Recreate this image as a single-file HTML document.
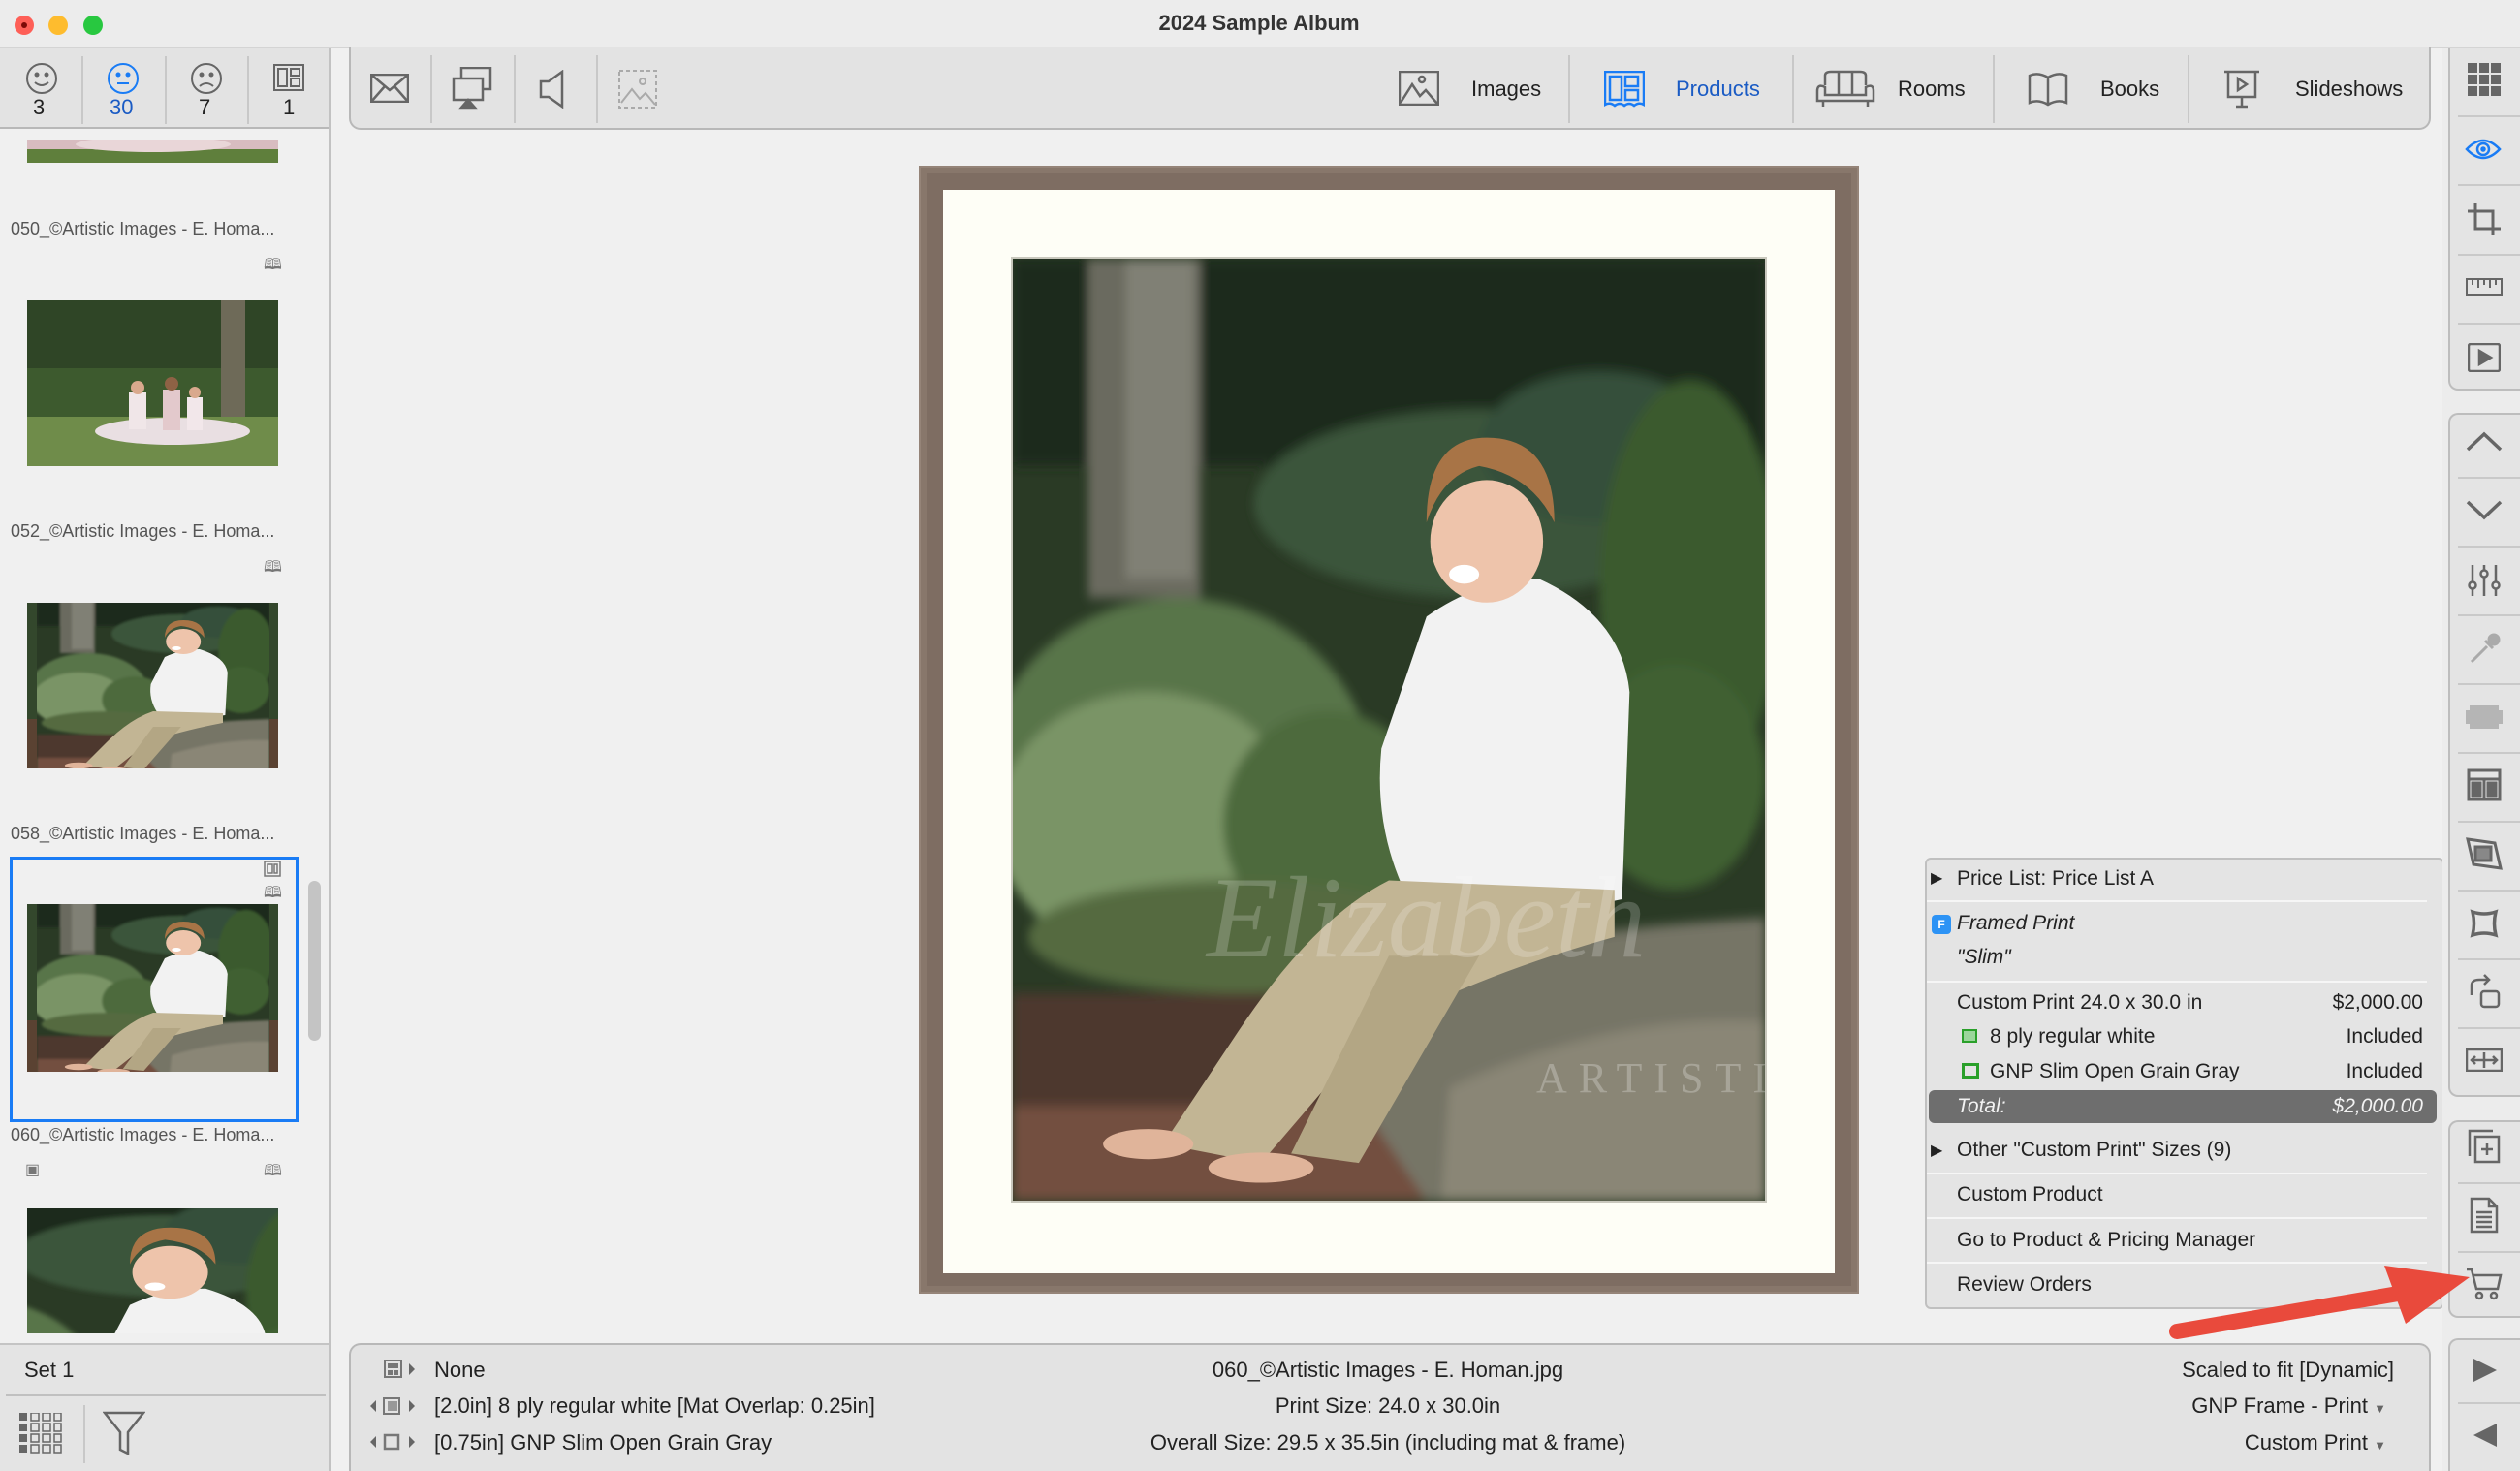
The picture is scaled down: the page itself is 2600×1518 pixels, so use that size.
<!DOCTYPE html>
<html><head><meta charset="utf-8">
<style>
*{margin:0;padding:0;box-sizing:border-box}
html,body{width:2600px;height:1518px;overflow:hidden}
body{background:#f0f0f0;font-family:"Liberation Sans",sans-serif;color:#222;position:relative}
.a{position:absolute}
.t{position:absolute;white-space:nowrap}
.sep{position:absolute;width:2px;background:#c8c8c8}
.lbl{font-size:18px;color:#555}
.pr{font-size:21px;color:#222}
.rg{position:absolute;left:2526px;width:80px;background:#e4e4e4;border:2px solid #bdbdbd;border-right:none;border-radius:10px 0 0 10px}
.rs{position:absolute;left:2536px;width:64px;height:2px;background:#c9c9c9}
.bt{font-size:22px;color:#222}
</style></head><body>
<svg width="0" height="0" style="position:absolute">
<defs>
<filter id="bl"><feGaussianBlur stdDeviation="0.6"/></filter>
<symbol id="photo" viewBox="0 0 100 100" preserveAspectRatio="none">
<rect width="100" height="100" fill="#2a3a25"/>
<g filter="url(#bl)">
<rect x="0" y="0" width="100" height="22" fill="#1e2a1b"/>
<ellipse cx="62" cy="26" rx="30" ry="10" fill="#3b553a"/>
<ellipse cx="78" cy="20" rx="16" ry="8" fill="#34503a"/>
<ellipse cx="90" cy="35" rx="12" ry="22" fill="#3a5a2e"/>
<ellipse cx="88" cy="55" rx="12" ry="12" fill="#3f6030"/>
<rect x="10" y="0" width="15" height="36" fill="#6a6a5f"/>
<rect x="15" y="0" width="9" height="34" fill="#808075"/>
<ellipse cx="22" cy="56" rx="26" ry="20" fill="#59744a"/>
<ellipse cx="18" cy="60" rx="20" ry="14" fill="#7a9466"/>
<ellipse cx="42" cy="60" rx="14" ry="12" fill="#4d6a3e"/>
<ellipse cx="30" cy="72" rx="28" ry="6" fill="#546b40"/>
<rect x="0" y="78" width="65" height="22" fill="#4e392d"/>
<rect x="0" y="90" width="68" height="10" fill="#73503f"/>
<path d="M38 80 Q55 72 100 70 L100 100 L55 100 Z" fill="#767466"/>
<path d="M58 88 Q80 80 100 81 L100 100 L57 100 Z" fill="#8a8676"/>
</g>
<path d="M55 38 Q62 34 70 34 Q81 38 82 46 L81 68 Q70 70 52 67 Q48 60 49 52 Z" fill="#f2f2f2"/>
<path d="M50 66 L80 67 L80 72 Q62 76 48 82 L33 96 L20 94 L30 82 Q40 70 50 66 Z" fill="#c2b594"/>
<path d="M50 74 L62 74 L46 96 L37 95 Z" fill="#b3a684"/>
<ellipse cx="18" cy="94" rx="6" ry="1.6" fill="#e0b49a"/>
<ellipse cx="33" cy="96.5" rx="7" ry="1.6" fill="#e0b49a"/>
<ellipse cx="63" cy="30" rx="7.5" ry="6.5" fill="#eec4ab"/>
<path d="M55 28 Q55 19 63 19 Q72 19 72 28 Q69 23 62 22 Q57 23 55 28 Z" fill="#a87446"/>
<ellipse cx="60" cy="33.5" rx="2" ry="1" fill="#fff"/>
</symbol>
</defs>
</svg>

<!-- title bar -->
<div class="a" style="left:0;top:0;width:2600px;height:50px;background:#ececec;border-bottom:1px solid #d4d4d4"></div>
<div class="a" style="left:15px;top:16px;width:20px;height:20px;border-radius:50%;background:#fe5f57"></div>
<div class="a" style="left:22px;top:23px;width:6px;height:6px;border-radius:50%;background:#7d0a07"></div>
<div class="a" style="left:50px;top:16px;width:20px;height:20px;border-radius:50%;background:#febc2e"></div>
<div class="a" style="left:86px;top:16px;width:20px;height:20px;border-radius:50%;background:#28c840"></div>
<div class="t" style="left:0;width:2598px;top:11px;text-align:center;font-size:22px;font-weight:bold;color:#333">2024 Sample Album</div>

<!-- left sidebar -->
<div class="a" style="left:0;top:50px;width:340px;height:83px;background:#e3e3e3;border-bottom:2px solid #b8b8b8"></div>
<div class="a" style="left:339px;top:50px;width:2px;height:1468px;background:#c2c2c2"></div>
<div class="sep" style="left:84px;top:58px;height:70px"></div>
<div class="sep" style="left:170px;top:58px;height:70px"></div>
<div class="sep" style="left:255px;top:58px;height:70px"></div>
<svg class="a" style="left:26px;top:64px" width="34" height="34" viewBox="0 0 34 34" fill="none" stroke="#666" stroke-width="2"><circle cx="17" cy="17" r="15"/><circle cx="12" cy="13" r="1.5" fill="#666"/><circle cx="22" cy="13" r="1.5" fill="#666"/><path d="M10 21 Q17 27 24 21"/></svg>
<div class="t" style="left:34px;top:98px;font-size:22px">3</div>
<svg class="a" style="left:110px;top:64px" width="34" height="34" viewBox="0 0 34 34" fill="none" stroke="#1a7cf5" stroke-width="2"><circle cx="17" cy="17" r="15"/><circle cx="12" cy="13" r="1.5" fill="#1a7cf5"/><circle cx="22" cy="13" r="1.5" fill="#1a7cf5"/><path d="M11 22 H23"/></svg>
<div class="t" style="left:113px;top:98px;font-size:22px;color:#1a5bc4">30</div>
<svg class="a" style="left:196px;top:64px" width="34" height="34" viewBox="0 0 34 34" fill="none" stroke="#666" stroke-width="2"><circle cx="17" cy="17" r="15"/><circle cx="12" cy="13" r="1.5" fill="#666"/><circle cx="22" cy="13" r="1.5" fill="#666"/><path d="M10 25 Q17 19 24 25"/></svg>
<div class="t" style="left:205px;top:98px;font-size:22px">7</div>
<svg class="a" style="left:282px;top:66px" width="32" height="30" viewBox="0 0 32 30" fill="none" stroke="#666" stroke-width="2"><rect x="1" y="1" width="30" height="26"/><rect x="5" y="5" width="9" height="18"/><rect x="18" y="5" width="9" height="7"/><rect x="18" y="15" width="9" height="8"/></svg>
<div class="t" style="left:292px;top:98px;font-size:22px">1</div>

<!-- thumbnails -->
<svg class="a" style="left:28px;top:144px" width="259" height="24"><rect width="259" height="24" fill="#5f7f3c"/><rect width="259" height="10" fill="#d8bcc0"/><ellipse cx="130" cy="5" rx="80" ry="8" fill="#e9d6d8"/></svg>
<div class="t lbl" style="left:11px;top:226px">050_©Artistic Images - E. Homa...</div>
<div class="t" style="left:272px;top:262px;font-size:16px;color:#777">🕮</div>
<svg class="a" style="left:28px;top:310px" width="259" height="171" viewBox="0 0 259 171"><rect width="259" height="171" fill="#3d5a2e"/><rect x="0" y="0" width="259" height="70" fill="#2f4526"/><rect x="200" y="0" width="25" height="130" fill="#6e6a58"/><rect x="0" y="120" width="259" height="51" fill="#6f8c4a"/><ellipse cx="150" cy="135" rx="80" ry="14" fill="#e9dfe2"/><rect x="105" y="95" width="18" height="38" fill="#f0e6e8"/><rect x="140" y="92" width="18" height="42" fill="#e3c9cc"/><rect x="165" y="100" width="16" height="34" fill="#f2e7ea"/><circle cx="114" cy="90" r="7" fill="#d9a98d"/><circle cx="149" cy="86" r="7" fill="#8e6245"/><circle cx="173" cy="95" r="6" fill="#d9a98d"/></svg>
<div class="t lbl" style="left:11px;top:538px">052_©Artistic Images - E. Homa...</div>
<div class="t" style="left:272px;top:574px;font-size:16px;color:#777">🕮</div>
<svg class="a" style="left:28px;top:622px" width="259" height="171"><rect width="259" height="171" fill="#33472c"/><rect x="0" y="120" width="259" height="51" fill="#5a4232"/><use href="#photo" x="10" y="-20" width="240" height="200"/></svg>
<div class="t lbl" style="left:11px;top:850px">058_©Artistic Images - E. Homa...</div>
<div class="a" style="left:10px;top:884px;width:298px;height:274px;border:3px solid #1a7cf5"></div>
<svg class="a" style="left:272px;top:888px" width="18" height="18" viewBox="0 0 18 18" fill="none" stroke="#777" stroke-width="1.5"><rect x="1" y="1" width="16" height="15"/><rect x="4" y="4" width="5" height="9"/><rect x="11" y="4" width="3" height="9"/></svg>
<div class="t" style="left:272px;top:910px;font-size:16px;color:#777">🕮</div>
<svg class="a" style="left:28px;top:933px" width="259" height="173"><rect width="259" height="173" fill="#33472c"/><rect x="0" y="120" width="259" height="53" fill="#5a4232"/><use href="#photo" x="10" y="-20" width="240" height="200"/></svg>
<div class="t lbl" style="left:11px;top:1161px">060_©Artistic Images - E. Homa...</div>
<div class="t" style="left:26px;top:1197px;font-size:16px;color:#777">▣</div>
<div class="t" style="left:272px;top:1197px;font-size:16px;color:#777">🕮</div>
<svg class="a" style="left:28px;top:1247px" width="259" height="129"><use href="#photo" x="-180" y="-60" width="520" height="420"/></svg>
<div class="a" style="left:318px;top:909px;width:13px;height:165px;border-radius:7px;background:#c4c4c4"></div>

<!-- sidebar bottom -->
<div class="a" style="left:0;top:1386px;width:339px;height:132px;background:#e4e4e4;border-top:2px solid #c4c4c4"></div>
<div class="t" style="left:25px;top:1401px;font-size:22px">Set 1</div>
<div class="a" style="left:6px;top:1439px;width:330px;height:2px;background:#c0c0c0"></div>
<div class="sep" style="left:86px;top:1450px;height:60px"></div>
<svg class="a" style="left:20px;top:1458px" width="44" height="42" viewBox="0 0 44 42" fill="#666"><g id="gr"><rect x="0" y="0" width="8" height="8"/><rect x="12" y="0" width="8" height="8" fill="none" stroke="#666" stroke-width="1.5"/><rect x="24" y="0" width="8" height="8" fill="none" stroke="#666" stroke-width="1.5"/><rect x="36" y="0" width="7" height="8" fill="none" stroke="#666" stroke-width="1.5"/></g><use href="#gr" y="11"/><use href="#gr" y="22"/><use href="#gr" y="33"/></svg>
<svg class="a" style="left:106px;top:1456px" width="44" height="46" viewBox="0 0 44 46" fill="none" stroke="#666" stroke-width="2.5"><path d="M2 2 H42 L26 22 V44 L18 40 V22 Z"/></svg>

<!-- main toolbar -->
<div class="a" style="left:360px;top:48px;width:2148px;height:86px;background:#e3e3e3;border:2px solid #b8b8b8;border-top:none;border-radius:0 0 12px 12px"></div>
<div class="sep" style="left:444px;top:57px;height:70px"></div>
<div class="sep" style="left:530px;top:57px;height:70px"></div>
<div class="sep" style="left:615px;top:57px;height:70px"></div>
<svg class="a" style="left:382px;top:76px" width="40" height="30" viewBox="0 0 40 30" fill="none" stroke="#666" stroke-width="2.5"><rect x="1" y="1" width="38" height="28"/><path d="M1 1 L20 17 L39 1 M1 29 L15 13 M39 29 L25 13"/></svg>
<svg class="a" style="left:466px;top:69px" width="42" height="44" viewBox="0 0 42 44" fill="none" stroke="#666" stroke-width="2.5"><rect x="10" y="1" width="30" height="22"/><rect x="2" y="12" width="30" height="22" fill="#e3e3e3"/><path d="M17 34 L10 42 H24 Z" fill="#666"/></svg>
<svg class="a" style="left:556px;top:72px" width="30" height="40" viewBox="0 0 30 40" fill="none" stroke="#666" stroke-width="2.5"><path d="M2 12 H10 L24 2 V38 L10 28 H2 Z"/></svg>
<svg class="a" style="left:638px;top:72px" width="40" height="40" viewBox="0 0 40 40" fill="none" stroke="#aaa" stroke-width="2" stroke-dasharray="4 3"><rect x="1" y="1" width="38" height="38"/><path d="M3 34 L14 20 L22 30 L28 24 L38 36" stroke-dasharray="none"/><circle cx="25" cy="12" r="3" stroke-dasharray="none"/></svg>

<svg class="a" style="left:1443px;top:73px" width="42" height="36" viewBox="0 0 42 36" fill="none" stroke="#666" stroke-width="2.5"><rect x="1" y="1" width="40" height="34"/><path d="M2 33 L14 14 L22 26 L28 20 L40 34"/><circle cx="24" cy="9" r="3"/></svg>
<div class="t" style="left:1518px;top:79px;font-size:22px">Images</div>
<div class="sep" style="left:1618px;top:57px;height:70px"></div>
<svg class="a" style="left:1655px;top:73px" width="42" height="38" viewBox="0 0 42 38" fill="none" stroke="#1a7cf5" stroke-width="2.5"><path d="M1 1 H41 V35 Q36 32 31 36 Q26 32 21 36 Q16 32 11 36 Q6 32 1 35 Z"/><rect x="6" y="6" width="12" height="24"/><rect x="22" y="6" width="13" height="10"/><rect x="22" y="20" width="13" height="10"/></svg>
<div class="t" style="left:1729px;top:79px;font-size:22px;color:#1a5bc4">Products</div>
<div class="sep" style="left:1849px;top:57px;height:70px"></div>
<svg class="a" style="left:1873px;top:72px" width="62" height="40" viewBox="0 0 62 40" fill="none" stroke="#666" stroke-width="2.5"><path d="M10 16 V6 Q10 2 16 2 H46 Q52 2 52 6 V16"/><path d="M10 18 Q2 14 2 22 V32 H60 V22 Q60 14 52 18 V26 H10 Z"/><path d="M24 2 V26 M38 2 V26 M8 32 V38 M54 32 V38"/></svg>
<div class="t" style="left:1958px;top:79px;font-size:22px">Rooms</div>
<div class="sep" style="left:2056px;top:57px;height:70px"></div>
<svg class="a" style="left:2091px;top:74px" width="44" height="36" viewBox="0 0 44 36" fill="none" stroke="#666" stroke-width="2.5"><path d="M22 6 Q12 0 3 4 V32 Q12 28 22 34 Q32 28 41 32 V4 Q32 0 22 6 Z M22 6 V34"/></svg>
<div class="t" style="left:2167px;top:79px;font-size:22px">Books</div>
<div class="sep" style="left:2257px;top:57px;height:70px"></div>
<svg class="a" style="left:2294px;top:72px" width="38" height="40" viewBox="0 0 38 40" fill="none" stroke="#666" stroke-width="2.5"><path d="M1 2 H37 M5 2 V28 H33 V2 M19 28 V38 M13 38 H25"/><path d="M15 9 L24 15 L15 21 Z"/></svg>
<div class="t" style="left:2368px;top:79px;font-size:22px">Slideshows</div>

<!-- frame -->
<div class="a" style="left:948px;top:171px;width:970px;height:1164px;background:#7e6d62;border:2px solid #958478;box-shadow:inset 0 0 0 6px #88776b"></div>
<div class="a" style="left:973px;top:196px;width:920px;height:1118px;background:#fefef6"></div>
<div class="a" style="left:1043px;top:265px;width:780px;height:976px;background:#c9c8bd"></div>
<svg class="a" style="left:1045px;top:267px" width="776" height="972"><use href="#photo" width="776" height="972"/><text x="200" y="720" font-family="Liberation Serif,serif" font-style="italic" font-size="120" fill="#ffffff" fill-opacity="0.2">Elizabeth</text><text x="540" y="860" font-family="Liberation Serif,serif" font-size="44" letter-spacing="12" fill="#ffffff" fill-opacity="0.25">ARTISTI</text></svg>

<!-- price panel -->
<div class="a" style="left:1986px;top:885px;width:536px;height:466px;background:#e4e4e4;border:2px solid #c0c0c0;border-radius:6px"></div>
<div class="a" style="left:1988px;top:929px;width:516px;height:2px;background:#f6f6f6"></div>
<div class="a" style="left:1988px;top:1012px;width:516px;height:2px;background:#f6f6f6"></div>
<div class="a" style="left:1988px;top:1210px;width:516px;height:2px;background:#f6f6f6"></div>
<div class="a" style="left:1988px;top:1256px;width:516px;height:2px;background:#f6f6f6"></div>
<div class="a" style="left:1988px;top:1302px;width:516px;height:2px;background:#f6f6f6"></div>
<div class="t pr" style="left:1992px;top:896px;font-size:16px">▶</div>
<div class="t pr" style="left:2019px;top:895px">Price List: Price List A</div>
<div class="a" style="left:1993px;top:944px;width:20px;height:20px;border-radius:4px;background:#2d93f5;color:#fff;font-size:12px;font-weight:bold;text-align:center;line-height:20px">F</div>
<div class="t pr" style="left:2019px;top:941px;font-style:italic">Framed Print</div>
<div class="t pr" style="left:2019px;top:976px;font-style:italic">"Slim"</div>
<div class="t pr" style="left:2019px;top:1023px">Custom Print 24.0 x 30.0 in</div>
<div class="t pr" style="right:100px;top:1023px">$2,000.00</div>
<div class="a" style="left:2024px;top:1062px;width:16px;height:14px;border:2px solid #2aa02a;background:#9bd69b"></div>
<div class="t pr" style="left:2053px;top:1058px">8 ply regular white</div>
<div class="t pr" style="right:100px;top:1058px">Included</div>
<div class="a" style="left:2024px;top:1097px;width:18px;height:16px;border:3px solid #2aa02a"></div>
<div class="t pr" style="left:2053px;top:1094px">GNP Slim Open Grain Gray</div>
<div class="t pr" style="right:100px;top:1094px">Included</div>
<div class="a" style="left:1990px;top:1125px;width:524px;height:34px;background:#6e6e6e;border-radius:6px"></div>
<div class="t pr" style="left:2019px;top:1130px;font-style:italic;color:#f2f2f2">Total:</div>
<div class="t pr" style="right:100px;top:1130px;font-style:italic;color:#f2f2f2">$2,000.00</div>
<div class="t pr" style="left:1992px;top:1177px;font-size:16px">▶</div>
<div class="t pr" style="left:2019px;top:1175px">Other "Custom Print" Sizes (9)</div>
<div class="t pr" style="left:2019px;top:1221px">Custom Product</div>
<div class="t pr" style="left:2019px;top:1268px">Go to Product &amp; Pricing Manager</div>
<div class="t pr" style="left:2019px;top:1314px">Review Orders</div>

<!-- bottom bar -->
<div class="a" style="left:360px;top:1386px;width:2148px;height:132px;background:#e3e3e3;border:2px solid #b8b8b8;border-bottom:none;border-radius:12px 12px 0 0"></div>
<svg class="a" style="left:396px;top:1403px" width="42" height="20" viewBox="0 0 42 20"><rect x="1" y="1" width="17" height="17" fill="none" stroke="#777" stroke-width="2"/><rect x="4" y="4" width="11" height="5" fill="#777"/><rect x="4" y="11" width="5" height="5" fill="#777"/><rect x="10" y="11" width="5" height="5" fill="#777"/><path d="M26 4 L32 10 L26 16 Z" fill="#666"/></svg>
<div class="t bt" style="left:448px;top:1401px">None</div>
<svg class="a" style="left:380px;top:1440px" width="60" height="22" viewBox="0 0 60 22"><path d="M8 5 L2 11 L8 17 Z" fill="#666"/><rect x="16" y="3" width="16" height="16" fill="none" stroke="#777" stroke-width="2"/><rect x="20" y="6" width="10" height="10" fill="#999"/><path d="M42 5 L48 11 L42 17 Z" fill="#666"/></svg>
<div class="t bt" style="left:448px;top:1438px">[2.0in] 8 ply regular white [Mat Overlap: 0.25in]</div>
<svg class="a" style="left:380px;top:1477px" width="60" height="22" viewBox="0 0 60 22"><path d="M8 5 L2 11 L8 17 Z" fill="#666"/><rect x="17" y="4" width="14" height="14" fill="none" stroke="#777" stroke-width="2.5"/><path d="M42 5 L48 11 L42 17 Z" fill="#666"/></svg>
<div class="t bt" style="left:448px;top:1476px">[0.75in] GNP Slim Open Grain Gray</div>
<div class="t bt" style="left:1032px;width:800px;text-align:center;top:1401px">060_©Artistic Images - E. Homan.jpg</div>
<div class="t bt" style="left:1032px;width:800px;text-align:center;top:1438px">Print Size: 24.0 x 30.0in</div>
<div class="t bt" style="left:1032px;width:800px;text-align:center;top:1476px">Overall Size: 29.5 x 35.5in (including mat &amp; frame)</div>
<div class="t bt" style="right:130px;top:1401px">Scaled to fit [Dynamic]</div>
<div class="t bt" style="right:138px;top:1438px">GNP Frame - Print <span style="font-size:13px;color:#666">▼</span></div>
<div class="t bt" style="right:138px;top:1476px">Custom Print <span style="font-size:13px;color:#666">▼</span></div>

<!-- right column -->
<div class="a" style="left:2520px;top:50px;width:80px;height:1468px;background:#ececec"></div>
<div class="rg" style="top:50px;height:353px;border-top:none;border-radius:0 0 0 10px"></div>
<div class="rg" style="top:426px;height:706px"></div>
<div class="rg" style="top:1156px;height:204px"></div>
<div class="rg" style="top:1381px;height:137px;border-bottom:none;border-radius:10px 0 0 0"></div>
<div class="rs" style="top:119px"></div><div class="rs" style="top:190px"></div><div class="rs" style="top:262px"></div><div class="rs" style="top:333px"></div>
<div class="rs" style="top:492px"></div><div class="rs" style="top:563px"></div><div class="rs" style="top:634px"></div><div class="rs" style="top:705px"></div><div class="rs" style="top:776px"></div><div class="rs" style="top:847px"></div><div class="rs" style="top:918px"></div><div class="rs" style="top:989px"></div><div class="rs" style="top:1060px"></div>
<div class="rs" style="top:1220px"></div><div class="rs" style="top:1291px"></div>
<div class="rs" style="top:1447px"></div>
<svg class="a" style="left:2546px;top:65px" width="34" height="34" fill="#666"><rect x="0" y="0" width="10" height="10"/><rect x="12" y="0" width="10" height="10"/><rect x="24" y="0" width="10" height="10"/><rect x="0" y="12" width="10" height="10"/><rect x="12" y="12" width="10" height="10"/><rect x="24" y="12" width="10" height="10"/><rect x="0" y="24" width="10" height="10"/><rect x="12" y="24" width="10" height="10"/><rect x="24" y="24" width="10" height="10"/></svg>
<svg class="a" style="left:2543px;top:142px" width="38" height="24" viewBox="0 0 38 24" fill="none" stroke="#1a7cf5" stroke-width="2.5"><path d="M2 12 Q19 -6 36 12 Q19 30 2 12 Z"/><circle cx="19" cy="12" r="6"/><circle cx="19" cy="12" r="1.5" fill="#1a7cf5"/></svg>
<svg class="a" style="left:2545px;top:209px" width="36" height="36" viewBox="0 0 36 36" fill="none" stroke="#666" stroke-width="3"><path d="M9 1 V27 H35 M1 9 H27 V33"/></svg>
<svg class="a" style="left:2544px;top:287px" width="38" height="18" viewBox="0 0 38 18" fill="none" stroke="#666" stroke-width="2"><rect x="1" y="1" width="36" height="16"/><path d="M7 1 V7 M13 1 V10 M19 1 V7 M25 1 V10 M31 1 V7"/></svg>
<svg class="a" style="left:2546px;top:354px" width="34" height="30" viewBox="0 0 34 30" fill="none" stroke="#666" stroke-width="2.5"><rect x="1" y="1" width="32" height="28" rx="2"/><path d="M12 8 L24 15 L12 22 Z" fill="#666"/></svg>
<svg class="a" style="left:2544px;top:444px" width="38" height="22" viewBox="0 0 38 22" fill="none" stroke="#666" stroke-width="3.5"><path d="M2 20 L19 4 L36 20"/></svg>
<svg class="a" style="left:2544px;top:516px" width="38" height="22" viewBox="0 0 38 22" fill="none" stroke="#666" stroke-width="3.5"><path d="M2 2 L19 18 L36 2"/></svg>
<svg class="a" style="left:2545px;top:582px" width="36" height="34" viewBox="0 0 36 34" fill="none" stroke="#666" stroke-width="2.5"><path d="M6 1 V33 M18 1 V33 M30 1 V33"/><circle cx="6" cy="22" r="3.5" fill="#e4e4e4"/><circle cx="18" cy="10" r="3.5" fill="#e4e4e4"/><circle cx="30" cy="22" r="3.5" fill="#e4e4e4"/></svg>
<svg class="a" style="left:2546px;top:653px" width="34" height="34" viewBox="0 0 34 34" fill="none" stroke="#aaa" stroke-width="3"><path d="M4 30 L20 14 M18 8 L26 16"/><circle cx="27" cy="7" r="5" fill="#aaa"/></svg>
<svg class="a" style="left:2544px;top:726px" width="38" height="28" viewBox="0 0 38 28" fill="#b5b5b5"><rect x="4" y="2" width="30" height="24"/><rect x="0" y="7" width="38" height="14"/></svg>
<svg class="a" style="left:2545px;top:793px" width="36" height="34" viewBox="0 0 36 34" fill="none" stroke="#666" stroke-width="3"><rect x="2" y="2" width="32" height="30"/><path d="M2 11 H34 M18 11 V32" /><rect x="6" y="15" width="8" height="13" fill="#666"/><rect x="22" y="15" width="8" height="13" fill="#666"/></svg>
<svg class="a" style="left:2544px;top:864px" width="38" height="36" viewBox="0 0 38 36" fill="none" stroke="#666" stroke-width="3"><path d="M2 2 L30 6 L36 32 L8 28 Z"/><rect x="10" y="10" width="16" height="14" fill="#888"/></svg>
<svg class="a" style="left:2545px;top:936px" width="36" height="34" viewBox="0 0 36 34" fill="none" stroke="#666" stroke-width="3.5"><path d="M6 5 Q18 9 30 5 Q27 17 30 29 Q18 25 6 29 Q9 17 6 5 Z"/></svg>
<svg class="a" style="left:2546px;top:1005px" width="34" height="36" viewBox="0 0 34 36" fill="none" stroke="#666" stroke-width="2.5"><path d="M4 22 V12 Q4 6 12 6 H22 M17 1 L22 6 L17 11"/><rect x="14" y="18" width="18" height="16" rx="3"/></svg>
<svg class="a" style="left:2544px;top:1082px" width="38" height="24" viewBox="0 0 38 24" fill="none" stroke="#666" stroke-width="2.5"><rect x="1" y="1" width="36" height="22"/><path d="M6 12 H32 M10 8 L6 12 L10 16 M28 8 L32 12 L28 16 M19 4 V20"/></svg>
<svg class="a" style="left:2546px;top:1165px" width="34" height="36" viewBox="0 0 34 36" fill="none" stroke="#666" stroke-width="2.5"><path d="M2 28 V2 H26"/><rect x="8" y="8" width="24" height="26"/><path d="M20 15 V27 M14 21 H26"/></svg>
<svg class="a" style="left:2548px;top:1235px" width="30" height="38" viewBox="0 0 30 38" fill="none" stroke="#666" stroke-width="2.5"><path d="M2 2 H20 L28 10 V36 H2 Z M20 2 V10 H28 M7 16 H23 M7 21 H23 M7 26 H23 M7 31 H23"/></svg>
<svg class="a" style="left:2544px;top:1308px" width="38" height="34" viewBox="0 0 38 34" fill="none" stroke="#666" stroke-width="2.5"><path d="M1 2 H6 L11 22 H33 L36 8 H8"/><circle cx="14" cy="29" r="3"/><circle cx="29" cy="29" r="3"/></svg>
<svg class="a" style="left:2550px;top:1400px" width="28" height="28" fill="#666"><path d="M2 2 L26 14 L2 26 Z"/></svg>
<svg class="a" style="left:2550px;top:1467px" width="28" height="28" fill="#666"><path d="M26 2 L2 14 L26 26 Z"/></svg>

<!-- red arrow -->
<svg class="a" style="left:2230px;top:1290px" width="330" height="100" viewBox="0 0 330 100"><path d="M16 84 L250 44" stroke="#e94a3c" stroke-width="16" stroke-linecap="round"/><path d="M230 16 L318 28 L252 76 Z" fill="#e94a3c"/></svg>
</body></html>
